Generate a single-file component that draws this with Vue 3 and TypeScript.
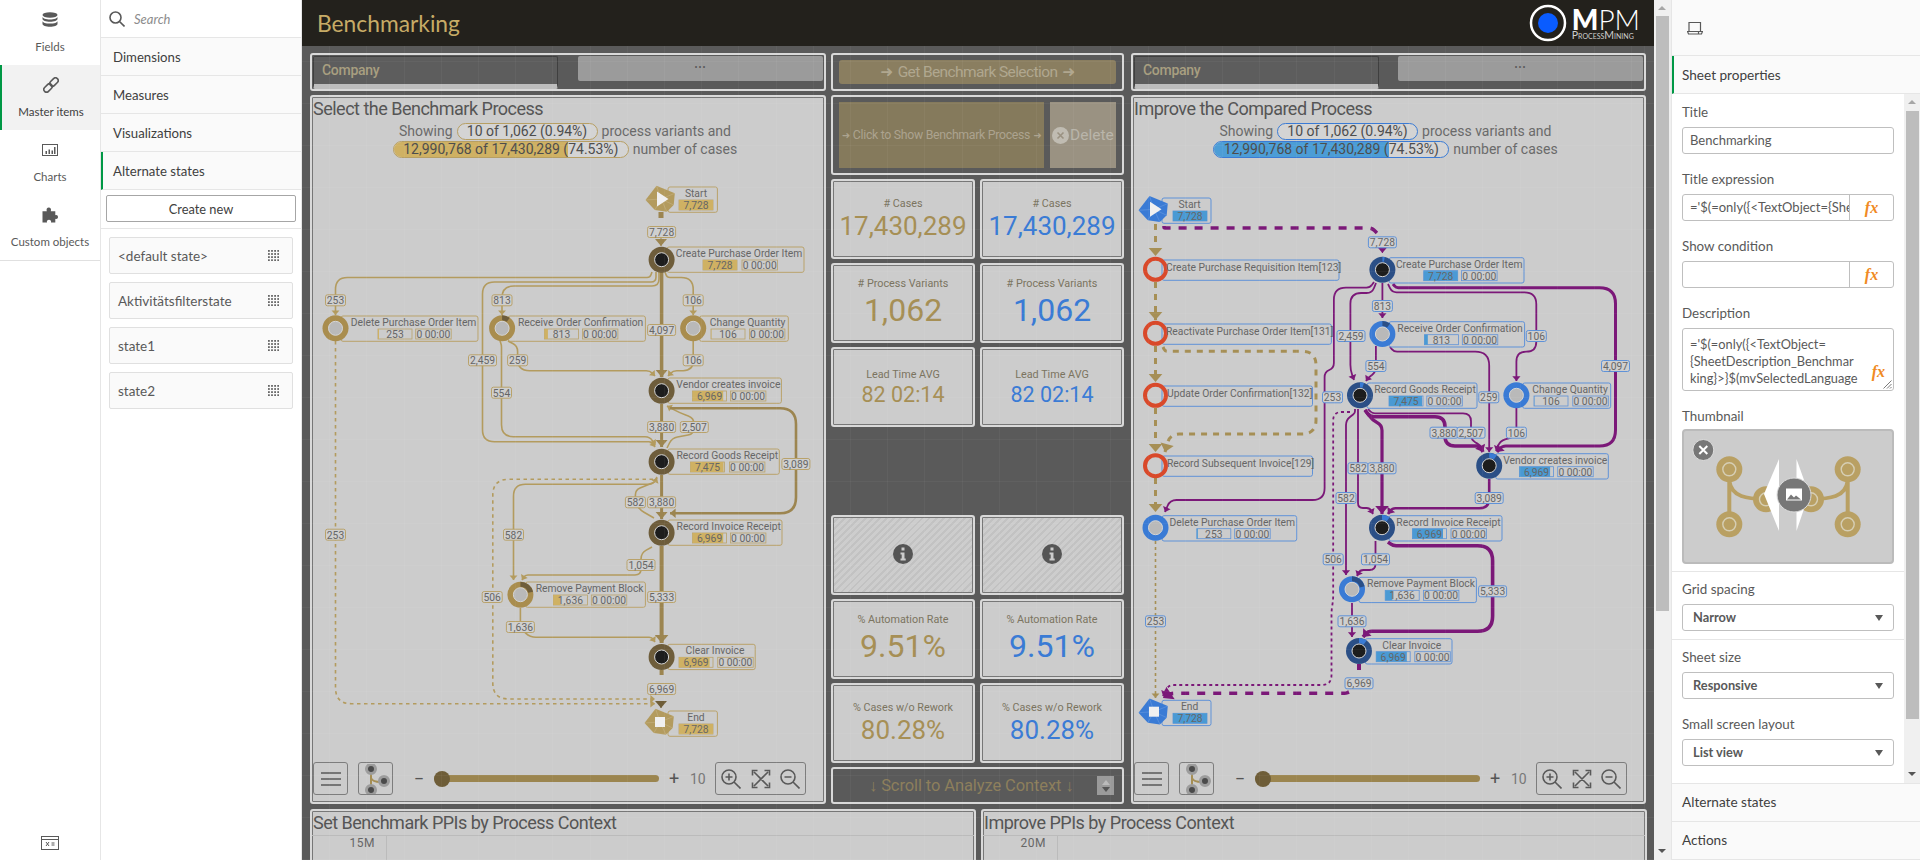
<template>
  <div class="app">
    <!-- left rail -->
    <aside class="rail">
      <div v-for="item in railItems" :key="item.label" class="rail-item" :class="{ active: item.active }">
        <svg class="rail-icon" viewBox="0 0 16 16">
          <g v-if="item.icon === 'db'" class="solid">
            <ellipse cx="8" cy="3" rx="7.5" ry="2.7" />
            <path d="M.5 4.700c0 1.600 3.400 2.700 7.500 2.700s7.500-1.100 7.500-2.700v2.400c0 1.600-3.400 2.700-7.500 2.700S.5 8.700 .5 7.100z" />
            <path d="M.5 8.900c0 1.600 3.400 2.700 7.500 2.700s7.500-1.100 7.500-2.700v3.200c0 1.600-3.400 2.700-7.500 2.700S.5 13.700 .5 12.100z" />
          </g>
          <g v-else-if="item.icon === 'link'" class="outline" transform="rotate(-45 8 8)">
            <rect x="-1" y="5.300" width="9.500" height="5.400" rx="2.700" />
            <rect x="7.500" y="5.300" width="9.500" height="5.400" rx="2.700" />
          </g>
          <g v-else-if="item.icon === 'chart'">
            <rect class="outline thin" x=".5" y="2.500" width="15" height="11" />
            <path class="solid" d="M3.500 9h1.500v3H3.500zM6.500 7.500H8V12H6.500zM9.500 8.500H11V12H9.500zM12 5h1.500v7H12z" />
          </g>
          <path v-else class="solid" d="M.5 4.300h4.300C4 2.200 5.200 .5 6.800 .5S9.600 2.200 8.800 4.300h4.500v3.900c1.500-.6 2.700.3 2.700 1.800s-1.200 2.400-2.700 1.800v3.700H9c.5-1.600-.6-2.700-2-2.700s-2.500 1.100-2 2.700H.5z" />
        </svg>
        <span>{{ item.label }}</span>
      </div>
      <svg class="rail-foot" viewBox="0 0 18 14">
        <rect class="outline thin" x=".5" y=".5" width="17" height="13" />
        <path class="outline thin" d="M.5 3.500h17M5 6l3 4M8 6l-3 4M10.500 7h3M10.500 9h3" />
      </svg>
    </aside>

    <!-- assets panel -->
    <section class="assets">
      <div class="search">
        <svg class="search-icon" viewBox="0 0 16 16">
          <circle cx="6.500" cy="6.500" r="5.500" />
          <path d="M10.500 10.500L15.500 15.500" />
        </svg>
        <span>Search</span>
      </div>
      <div v-for="row in assetRows" :key="row" class="asset-row" :class="{ active: row === 'Alternate states' }">{{ row }}</div>
      <div class="create-wrap">
        <button class="create">Create new</button>
      </div>
      <div class="states">
        <div v-for="state in states" :key="state" class="state">
          <span>{{ state }}</span>
          <svg class="grip" viewBox="0 0 11 11">
            <template v-for="r in 4" :key="r">
              <rect v-for="c in 4" :key="c" :x="(c - 1) * 3.100" :y="(r - 1) * 3.100" width="1.800" height="1.800" />
            </template>
          </svg>
        </div>
      </div>
    </section>

    <!-- sheet -->
    <main class="sheet">
      <header class="sheet-head">
        <h1>Benchmarking</h1>
        <div class="logo">
          <svg class="logo-mark" viewBox="0 0 38 38">
            <circle cx="19" cy="19" r="17" />
            <circle class="dot" cx="19" cy="19" r="10" />
          </svg>
          <div class="logo-text">
            <div class="logo-mpm"><b>M</b>PM</div>
            <div class="logo-sub">ProcessMining</div>
          </div>
        </div>
      </header>

      <div class="columns">
        <template v-for="(p, i) in panels" :key="p.key">
          <div class="col-process" :class="[p.theme, { second: i === 1 }]">
            <div class="tile company-tile">
              <div class="company">Company</div>
              <div class="more">•••</div>
            </div>
            <section class="tile process">
              <svg class="flow" :viewBox="p.viewBox">
                <g v-for="(edge, k) in p.edges" :key="k">
                  <path class="edge" :d="edge.d" :stroke="edge.color" :stroke-width="edge.width" :stroke-dasharray="edge.dash" />
                  <polygon v-if="edge.head" :points="edge.head" :fill="edge.color" />
                </g>
                <g v-for="n in p.nodes" :key="n.name">
                  <rect class="node-box" :x="n.x0" :y="n.y0" :width="n.x1 - n.x0" :height="n.kind === 'red' ? 20.300 : 25.300" rx="2" />
                  <circle v-if="n.kind === 'red'" class="ring-red" :cx="n.x" :cy="n.y" r="10.500" />
                  <g v-else-if="n.kind === 'start' || n.kind === 'end'" :transform="`translate(${n.x} ${n.y})`">
                    <polygon class="hex" points="-4.500,-13.300 13.800,-5.700 12.700,6 5.900,12.700 -6.200,11 -15.500,1" />
                    <path class="hex-lines" d="M-4.500-13.300L0 0M13.800-5.700L0 0M12.700 6L0 0M5.900 12.700L0 0M-6.200 11L0 0M-15.500 1L0 0" />
                    <polygon v-if="n.kind === 'start'" class="hex-mark" points="-4,-7.500 7.500,0 -4,7.500" />
                    <rect v-else class="hex-mark" x="-5" y="-5" width="10" height="10" />
                  </g>
                  <g v-else>
                    <circle :class="n.kind === 'dark' ? 'ring-dark' : 'ring-light'" :cx="n.x" :cy="n.y" r="13" />
                    <circle class="wedge" :class="n.kind" :cx="n.x" :cy="n.y" r="10.500" :stroke-dasharray="`${n.share * 66} 66`" :transform="`rotate(-90 ${n.x} ${n.y})`" />
                    <circle :class="n.kind === 'dark' ? 'core-dark' : 'core-light'" :cx="n.x" :cy="n.y" r="7" />
                  </g>
                  <text class="name" :class="{ lead: n.kind === 'red' }" :x="n.tx" :y="n.y0 + (n.kind === 'red' ? 7 : 6.500)">{{ n.name }}</text>
                  <template v-if="n.kind !== 'red'">
                    <rect class="cell" :x="n.bar" :y="n.y0 + 13" width="34" height="10" />
                    <rect class="cell-fill" :x="n.bar" :y="n.y0 + 13" :width="34 * n.fill" height="10" />
                    <text class="name" :x="n.bar + 17" :y="n.y0 + 18.300">{{ n.val }}</text>
                    <template v-if="n.time">
                      <rect class="cell" :x="n.time" :y="n.y0 + 13" width="35.500" height="10" />
                      <text class="name" :x="n.time + 17.700" :y="n.y0 + 18.300">0 00:00</text>
                    </template>
                  </template>
                </g>
                <g v-for="(b, k) in p.badges" :key="k">
                  <rect class="badge" :x="b.x - badgeWidth(b.t) / 2" :y="b.y - 5.500" :width="badgeWidth(b.t)" height="11" rx="2" />
                  <text class="name" :x="b.x" :y="b.y + .300">{{ b.t }}</text>
                </g>
              </svg>

              <h2>{{ p.title }}</h2>
              <div class="showing">
                <div class="line">
                  <span>Showing</span>
                  <span class="pill"><em>10 of 1,062 (0.94%)</em></span>
                  <span>process variants and</span>
                </div>
                <div class="line">
                  <span class="pill wide">
                    <i class="pill-fill" :style="{ width: caseShare + '%' }"></i>
                    <em>12,990,768 of 17,430,289 (74.53%)</em>
                  </span>
                  <span>number of cases</span>
                </div>
              </div>

              <div class="controls">
                <button class="ctl">
                  <svg viewBox="0 0 20 16"><path class="outline" d="M0 2h20M0 8h20M0 14h20" /></svg>
                </button>
                <button class="ctl branch">
                  <svg viewBox="0 0 28 30">
                    <path class="branch-line" d="M9 5v20M9 14c1 3 5 4 10 4" />
                    <circle class="branch-dot" cx="9" cy="5" r="4.500" />
                    <circle class="branch-dot" cx="22" cy="17" r="4.500" />
                    <circle class="branch-dot" cx="9" cy="26" r="4.500" />
                  </svg>
                </button>
                <span class="sign minus">−</span>
                <div class="track"><i class="thumb"></i></div>
                <span class="sign plus">+</span>
                <span class="ten">10</span>
                <div class="zooms">
                  <svg viewBox="0 0 20 20">
                    <circle class="outline" cx="8" cy="8" r="7" />
                    <path class="outline" d="M13 13l6.500 6.500M4.500 8h7M8 4.500v7" />
                  </svg>
                  <svg viewBox="0 0 20 20">
                    <path class="outline" d="M3 3l14 14M17 3L3 17M1.500 6.500v-5h5M13.500 1.500h5v5M1.500 13.500v5h5M13.500 18.500h5v-5" />
                  </svg>
                  <svg viewBox="0 0 20 20">
                    <circle class="outline" cx="8" cy="8" r="7" />
                    <path class="outline" d="M13 13l6.500 6.500M4.500 8h7" />
                  </svg>
                </div>
              </div>
            </section>
          </div>

          <!-- KPI column sits between both processes -->
          <div v-if="i === 0" class="col-mid">
            <div class="tile dark get-tile">
              <div class="get-btn"><span class="arrow">➜</span> Get Benchmark Selection <span class="arrow">➜</span></div>
            </div>
            <div class="tile dark pick-tile">
              <div class="pick"><span class="arrow">➜</span> Click to Show Benchmark Process <span class="arrow">➜</span></div>
              <div class="delete">
                <svg viewBox="0 0 17 17">
                  <circle cx="8.500" cy="8.500" r="8.500" />
                  <path d="M5.500 5.500l6 6M11.500 5.500l-6 6" />
                </svg>
                <span>Delete</span>
              </div>
            </div>
            <div class="kpis">
              <template v-for="kpi in kpis" :key="kpi.label">
                <div v-if="kpi.gap" class="kpi-gap"></div>
                <template v-else>
                  <div v-for="tone in tones" :key="tone" class="tile kpi" :class="{ hatch: kpi.info }">
                    <svg v-if="kpi.info" class="info" viewBox="0 0 20 20">
                      <circle cx="10" cy="10" r="10" />
                      <path d="M8.500 3.500h3v3h-3zM7.500 8.500h4v6h1.200v2H7.500v-2h1.200v-4H7.500z" />
                    </svg>
                    <template v-else>
                      <span class="kpi-label">{{ kpi.label }}</span>
                      <span class="kpi-value" :class="[tone, kpi.size]">{{ kpi.value }}</span>
                    </template>
                  </div>
                </template>
              </template>
            </div>
            <div class="tile dark scroll-tile">
              <span><b>↓</b> Scroll to Analyze Context <b>↓</b></span>
              <div class="stepper">
                <i class="tri up"></i>
                <i class="tri down"></i>
              </div>
            </div>
          </div>
        </template>
      </div>

      <div class="context">
        <section class="tile ctx">
          <h2>Set Benchmark PPIs by Process Context</h2>
          <div class="axis"><span>15M</span></div>
        </section>
        <section class="tile ctx">
          <h2>Improve PPIs by Process Context</h2>
          <div class="axis"><span>20M</span></div>
        </section>
      </div>
    </main>

    <div class="scrollbar outer">
      <i class="sb-arrow up"></i>
      <div class="sb-thumb"></div>
      <i class="sb-arrow down"></i>
    </div>

    <!-- properties -->
    <aside class="props">
      <div class="props-tool">
        <svg viewBox="0 0 16 14">
          <path d="M2 10V1.500h11.500V10M.5 10.500h11v2.500h-10zM11.500 10.500h4l-1 2.500h-3" />
        </svg>
      </div>
      <div class="props-tab">Sheet properties</div>
      <div class="props-body">
        <div class="props-scroll">
          <label>Title</label>
          <div class="field">Benchmarking</div>
          <label>Title expression</label>
          <div class="field fx-field">
            <span class="clip">{{ titleExpr }}</span>
            <span class="fx">fx</span>
          </div>
          <label>Show condition</label>
          <div class="field fx-field">
            <span class="clip"></span>
            <span class="fx">fx</span>
          </div>
          <label>Description</label>
          <div class="field area">
            <div v-for="l in descLines" :key="l">{{ l }}</div>
            <span class="fx">fx</span>
            <svg class="resize" viewBox="0 0 9 9"><path d="M8.500 .5l-8 8M8.500 4l-4.500 4.500M8.500 7l-1.500 1.500" /></svg>
          </div>
          <label>Thumbnail</label>
          <div class="thumb-box">
            <svg viewBox="1683 430 208 131">
              <g class="mpm">
                <path d="M1728.300 468v55M1846.700 468v55M1728.300 480c2 16 18 18 36 18M1846.700 480c-2 16-18 18-36 18" />
                <g v-for="c in thumbDots" :key="c[0] + '-' + c[1]">
                  <circle class="mpm-dot" :cx="c[0]" :cy="c[1]" r="13" />
                  <circle class="mpm-in" :cx="c[0]" :cy="c[1]" r="6.500" />
                </g>
              </g>
              <polygon class="white" points="1778,458 1763,493 1778,530" />
              <polygon class="white" points="1795.500,458 1808,493 1795.500,530" />
              <circle class="shade" cx="1793" cy="494" r="17" />
              <rect class="pic" x="1785.500" y="488" width="15" height="11" />
              <path class="pic-in" d="M1786 498.500l4-5 3 3 2-2 5 4z" />
              <circle class="shade small" cx="1702.300" cy="449" r="10.500" />
              <path class="close" d="M1698.300 445l8 8M1706.300 445l-8 8" />
            </svg>
          </div>
          <div class="sep"></div>
          <label>Grid spacing</label>
          <div class="field select last"><span>Narrow</span><i class="caret"></i></div>
          <div class="sep"></div>
          <label>Sheet size</label>
          <div class="field select"><span>Responsive</span><i class="caret"></i></div>
          <label>Small screen layout</label>
          <div class="field select"><span>List view</span><i class="caret"></i></div>
        </div>
        <div class="scrollbar inner">
          <i class="sb-arrow up"></i>
          <div class="sb-thumb"></div>
          <i class="sb-arrow down"></i>
        </div>
      </div>
      <div class="props-row">Alternate states</div>
      <div class="props-row">Actions</div>
    </aside>
  </div>
</template>

<script setup lang="ts">
type Pt = [number, number];

interface EdgeOpts {
  w?: number;
  c?: string;
  dash?: string;
  r?: number;
  a?: number;
}

const railItems = [
  { label: "Fields", icon: "db", active: false },
  { label: "Master items", icon: "link", active: true },
  { label: "Charts", icon: "chart", active: false },
  { label: "Custom objects", icon: "puzzle", active: false },
];
const assetRows = ["Dimensions", "Measures", "Visualizations", "Alternate states"];
const states = ["<default state>", "Aktivitätsfilterstate", "state1", "state2"];

const tones = ["gold", "blue"];
const kpis = [
  { label: "# Cases", value: "17,430,289", size: "s26" },
  { label: "# Process Variants", value: "1,062", size: "s32" },
  { label: "Lead Time AVG", value: "82 02:14", size: "s21" },
  { label: "gap", gap: true },
  { label: "info", info: true },
  { label: "% Automation Rate", value: "9.51%", size: "s32" },
  { label: "% Cases w/o Rework", value: "80.28%", size: "s26" },
];

const caseShare = 74.53;
const titleExpr = "='$(=only({<TextObject={SheetTitle_Benchmarking}>}";
const descLines = ["='$(=only({<TextObject=", "{SheetDescription_Benchmar", "king}>}$(mvSelectedLanguage"];
const thumbDots: Pt[] = [
  [1728.3, 468.3],
  [1728.3, 523.3],
  [1846.7, 468.3],
  [1846.7, 523.3],
  [1765, 498.3],
  [1810, 498.3],
];

function rounded(pts: Pt[], r: number): string {
  let d = `M${pts[0][0]} ${pts[0][1]}`;
  for (let i = 1; i < pts.length - 1; i++) {
    const [ax, ay] = pts[i - 1];
    const [bx, by] = pts[i];
    const [cx, cy] = pts[i + 1];
    const l1 = Math.hypot(ax - bx, ay - by);
    const l2 = Math.hypot(cx - bx, cy - by);
    const k = Math.min(r, l1 / 2, l2 / 2);
    d += ` L${bx + ((ax - bx) / l1) * k} ${by + ((ay - by) / l1) * k}`;
    d += ` Q${bx} ${by} ${bx + ((cx - bx) / l2) * k} ${by + ((cy - by) / l2) * k}`;
  }
  const end = pts[pts.length - 1];
  return `${d} L${end[0]} ${end[1]}`;
}

function arrowHead(pts: Pt[], size: number): string {
  const [tx, ty] = pts[pts.length - 1];
  const [px, py] = pts[pts.length - 2];
  const len = Math.hypot(tx - px, ty - py);
  const ux = (tx - px) / len;
  const uy = (ty - py) / len;
  const bx = tx - ux * size;
  const by = ty - uy * size;
  const s = size * 0.85;
  return `${tx},${ty} ${bx - uy * s},${by + ux * s} ${bx + uy * s},${by - ux * s}`;
}

function edge(pts: Pt[], base: string, o: EdgeOpts = {}) {
  const w = o.w ?? 1.6;
  return {
    d: rounded(pts, o.r ?? 12),
    color: o.c ?? base,
    width: w,
    dash: o.dash,
    head: o.a === 0 ? "" : arrowHead(pts, o.a ?? 3 + w),
  };
}

function node(x: number, y: number, kind: string, share: number, name: string, x0: number, x1: number, y0: number, tx: number, bar = 0, val = "", fill = 0, time = 0) {
  return { x, y, kind, share, name, x0, x1, y0, tx, bar, val, fill, time };
}

function badge(x: number, y: number, t: string) {
  return { x, y, t };
}

function badgeWidth(t: string): number {
  return t.length > 3 ? 28 : 20;
}

const goldThin = "#b39b5e";
const goldMain = "#9c8550";
const purple = "#7b1878";
const dashGold = "#a68f55";

const benchmarkEdges = [
  edge([[661, 212], [661, 218]], goldMain, { w: 5, a: 0 }),
  edge([[661, 238], [661, 246]], goldMain, { w: 1, a: 7 }),
  edge([[652, 272], [650, 277.5], [335.5, 277.5], [335.5, 315]], goldThin),
  edge([[656, 272], [656, 282], [482.5, 282], [482.5, 441.7], [652, 441.7], [655, 447]], goldThin),
  edge([[659, 272], [659, 286], [502, 286], [502, 315]], goldThin),
  edge([[661.6, 272], [661.6, 377]], goldMain, { w: 3.5, a: 7 }),
  edge([[665, 272], [667, 277.5], [693.2, 277.5], [693.2, 315]], goldThin),
  edge([[508, 341], [517.6, 346], [517.6, 370.7], [650, 370.7], [655, 376]], goldThin),
  edge([[693.2, 341], [693.2, 370.7], [673, 370.7], [668, 376]], goldThin),
  edge([[500, 341], [501.5, 345], [501.5, 436.7], [650, 436.7], [655, 445]], goldThin),
  edge([[661.6, 404], [661.6, 447]], goldMain, { w: 3, a: 7 }),
  edge([[667, 448], [672, 438], [694, 434], [694, 418], [680, 413], [667, 406]], goldThin, { r: 6 }),
  edge([[670, 408.3], [796, 408.3], [796, 513.3], [670, 513.3]], goldMain, { w: 2.6, r: 16 }),
  edge([[661.6, 475], [661.6, 519]], goldMain, { w: 3, a: 7 }),
  edge([[654, 518], [640, 510], [635.4, 502], [635.4, 490], [655, 482], [657, 478]], goldThin, { r: 5 }),
  edge([[657, 477], [653, 484.3], [513.5, 484.3], [513.5, 580]], goldThin),
  edge([[653, 479.3], [492.8, 479.3], [492.8, 699], [655, 699]], goldThin, { dash: "3.500 3.500", r: 16 }),
  edge([[335.5, 341], [335.5, 703.7], [655, 703.7]], goldThin, { dash: "3.500 3.500", r: 16 }),
  edge([[652, 547], [641, 553], [641, 575], [525, 575], [522, 580]], goldThin, { r: 6 }),
  edge([[661.6, 546], [661.6, 643]], goldMain, { w: 4, a: 8 }),
  edge([[520.4, 608], [520.4, 628], [530, 637.3], [652, 637.3], [655, 642]], goldThin, { r: 6 }),
  edge([[661.6, 670], [661.6, 675]], goldMain, { w: 4, a: 0 }),
  edge([[661, 702], [661, 708]], "#6e5d38", { w: 1, a: 7 }),
];

const compareEdges = [
  edge([[1155.5, 224], [1155.5, 256]], dashGold, { w: 3, dash: "6 6", a: 8 }),
  edge([[1155.5, 282], [1155.5, 320]], dashGold, { w: 3, dash: "6 6", a: 8 }),
  edge([[1155.5, 346], [1155.5, 382]], dashGold, { w: 3, dash: "6 6", a: 8 }),
  edge([[1155.5, 408], [1155.5, 452]], dashGold, { w: 3, dash: "6 6", a: 8 }),
  edge([[1155.5, 478], [1155.5, 512]], dashGold, { w: 3, dash: "6 6", a: 8 }),
  edge([[1163, 347], [1165, 351.3], [1316, 351.3], [1316, 434], [1170, 434], [1165, 452]], dashGold, { w: 3, dash: "6 6", r: 14, a: 8 }),
  edge([[1155.5, 541], [1155.5, 698]], dashGold, { dash: "3 3" }),
  edge([[1164, 226], [1164, 228], [1372, 228], [1377, 233]], purple, { w: 3.5, dash: "8 8", a: 0 }),
  edge([[1382.4, 246], [1382.4, 253]], purple, { w: 1, a: 8 }),
  edge([[1382.4, 283], [1382.4, 318]], purple, { w: 1.8 }),
  edge([[1374, 282], [1370, 287.7], [1333.9, 287.7], [1333.9, 368], [1324.6, 372], [1324.6, 500], [1170, 500], [1165, 512]], purple, { w: 1.8 }),
  edge([[1376, 283], [1372, 293], [1350.4, 293], [1350.4, 370], [1354, 380]], purple, { w: 1.8 }),
  edge([[1388, 284], [1392, 292.3], [1536.3, 292.3], [1536.3, 351.7], [1516.4, 351.7], [1516.4, 381]], purple, { w: 1.8 }),
  edge([[1393, 284], [1396, 287.7], [1615.5, 287.7], [1615.5, 446], [1502, 446], [1497, 452]], purple, { w: 3, r: 16 }),
  edge([[1375.9, 346], [1375.9, 372], [1368, 378], [1366, 381]], purple, { w: 1.8, r: 5 }),
  edge([[1390, 347], [1394, 351.7], [1489.2, 351.7], [1489.2, 452]], purple, { w: 1.8, r: 14 }),
  edge([[1516.4, 408], [1516.4, 436], [1500, 441], [1496, 451]], purple, { w: 1.8, r: 8 }),
  edge([[1365, 410], [1370, 416.7], [1445, 416.7], [1445, 446], [1480, 446], [1483, 452]], purple, { w: 3.5, r: 10 }),
  edge([[1368, 409], [1372, 413.3], [1471, 413.3], [1471, 440], [1480, 445], [1483, 451]], purple, { w: 1.8, r: 8 }),
  edge([[1365, 410], [1372, 420], [1382, 425], [1382, 514]], purple, { w: 3.2, r: 8, a: 8 }),
  edge([[1358, 409], [1358, 508], [1370, 508], [1373, 514]], purple, { w: 1.8, r: 5 }),
  edge([[1355, 409], [1355, 413], [1346, 420], [1346, 575]], purple, { w: 1.8, r: 5 }),
  edge([[1350, 412], [1333.2, 412], [1333.2, 600], [1331.5, 610], [1331.5, 685], [1168, 685], [1163, 696]], purple, { w: 1.8, dash: "3 3", r: 10 }),
  edge([[1489.2, 479], [1489.2, 508.3], [1392, 508.3], [1388, 514]], purple, { w: 2.6, r: 10 }),
  edge([[1375.5, 541], [1375.5, 570], [1360, 570], [1357, 576]], purple, { w: 1.8, r: 6 }),
  edge([[1388, 542], [1393, 545.7], [1492.6, 545.7], [1492.6, 631.3], [1368, 631.3], [1363, 637]], purple, { w: 3.6, r: 15 }),
  edge([[1352, 603], [1352, 637]], purple, { w: 1.8 }),
  edge([[1359, 664], [1359, 670]], purple, { w: 4, a: 0 }),
  edge([[1349, 692], [1346, 693.3], [1170, 693.3], [1163, 698]], purple, { w: 3.6, dash: "8 8", a: 9, r: 6 }),
];

const panels = [
  {
    key: "bench",
    theme: "gold",
    title: "Select the Benchmark Process",
    viewBox: "312 97 512 705",
    edges: benchmarkEdges,
    nodes: [
      node(661, 199, "start", 0, "Start", 668, 717.4, 187, 696, 679, "7,728", 1),
      node(661.6, 259.7, "dark", 0, "Create Purchase Order Item", 667, 804, 247, 739, 703, "7,728", 1, 742),
      node(335.5, 328.3, "light", 0, "Delete Purchase Order Item", 341, 478, 316, 413.6, 378, "253", 0.03, 415.7),
      node(502.1, 328.3, "light", 0.1, "Receive Order Confirmation", 508, 645.4, 316, 580.6, 544.5, "813", 0.1, 582.4),
      node(693.2, 328.3, "light", 0, "Change Quantity", 699.5, 788.3, 316, 747.6, 711, "106", 0.01, 749.4),
      node(661.6, 390.7, "dark", 0, "Vendor creates invoice", 667.8, 781.4, 378, 728.4, 692.6, "6,969", 0.9, 730.4),
      node(661.6, 461.7, "dark", 0, "Record Goods Receipt", 667.8, 779.3, 449, 727.3, 690.5, "7,475", 0.97, 729.4),
      node(661.6, 532.7, "dark", 0, "Record Invoice Receipt", 667.8, 782, 520, 728.7, 692.6, "6,969", 0.9, 730.4),
      node(520.4, 594.7, "light", 0.21, "Remove Payment Block", 525.5, 645.4, 582, 589.6, 553.4, "1,636", 0.21, 591.3),
      node(661.6, 657, "dark", 0, "Clear Invoice", 667.8, 755.2, 644.3, 715, 679, "6,969", 0.9, 717.7),
      node(660, 722, "end", 0, "End", 668, 717.4, 711, 696, 679, "7,728", 1),
    ],
    badges: [
      badge(661.6, 232, "7,728"), badge(335.5, 300.3, "253"), badge(502, 300.3, "813"), badge(693.2, 300.3, "106"),
      badge(661.6, 330, "4,097"), badge(482.5, 360.3, "2,459"), badge(517.6, 360.3, "259"), badge(693.2, 360.3, "106"),
      badge(501.5, 392.7, "554"), badge(661.6, 427, "3,880"), badge(694.3, 427, "2,507"), badge(795.9, 464, "3,089"),
      badge(635.4, 502.3, "582"), badge(661.6, 502.3, "3,880"), badge(335.5, 534.7, "253"), badge(513.5, 534.7, "582"),
      badge(641, 565, "1,054"), badge(492.2, 597, "506"), badge(661.6, 597, "5,333"), badge(520.4, 627, "1,636"),
      badge(661.6, 689, "6,969"),
    ],
  },
  {
    key: "compare",
    theme: "blue",
    title: "Improve the Compared Process",
    viewBox: "1133 97 511 705",
    edges: compareEdges,
    nodes: [
      node(1154, 209.3, "start", 0, "Start", 1162, 1211, 198, 1189.6, 1173, "7,728", 1),
      node(1155.5, 269.3, "red", 0, "Create Purchase Requisition Item[123]", 1162, 1339, 260, 1166),
      node(1155.5, 333.3, "red", 0, "Reactivate Purchase Order Item[131]", 1162, 1331.4, 324, 1166),
      node(1155.5, 395.3, "red", 0, "Update Order Confirmation[132]", 1162, 1312.5, 386, 1167),
      node(1155.5, 465.7, "red", 0, "Record Subsequent Invoice[129]", 1162, 1312.5, 456, 1167),
      node(1155.5, 527.7, "light", 0, "Delete Purchase Order Item", 1162, 1296.7, 515.7, 1232.3, 1196.8, "253", 0.03, 1234.7),
      node(1382.4, 269.7, "dark", 0.03, "Create Purchase Order Item", 1389, 1524, 257.7, 1459.2, 1423.7, "7,728", 1, 1461.6),
      node(1382.4, 334, "light", 0.1, "Receive Order Confirmation", 1389, 1524.6, 321.7, 1460, 1424.4, "813", 0.1, 1462.3),
      node(1360, 395.3, "dark", 0.05, "Record Goods Receipt", 1367, 1477, 383, 1425, 1389, "7,475", 0.97, 1426.8),
      node(1516.4, 395.3, "light", 0, "Change Quantity", 1522.6, 1610.7, 383, 1570, 1534, "106", 0.01, 1572.8),
      node(1489.2, 465.7, "dark", 0.1, "Vendor creates invoice", 1495.7, 1608.3, 453.7, 1555.3, 1519.5, "6,969", 0.9, 1557.7),
      node(1382, 527.7, "dark", 0.1, "Record Invoice Receipt", 1389, 1502, 515.7, 1448.5, 1412.4, "6,969", 0.9, 1451),
      node(1352, 589.3, "light", 0.21, "Remove Payment Block", 1359, 1476.4, 577.3, 1421, 1385.2, "1,636", 0.21, 1423.4),
      node(1359, 651, "dark", 0.1, "Clear Invoice", 1365.2, 1452, 638.7, 1411.7, 1376.2, "6,969", 0.9, 1414.8),
      node(1154, 711.7, "end", 0, "End", 1162, 1211, 700.3, 1189.6, 1173, "7,728", 1),
    ],
    badges: [
      badge(1382.4, 242.3, "7,728"), badge(1382.4, 306, "813"), badge(1351, 336, "2,459"), badge(1536.3, 336, "106"),
      badge(1615.5, 366, "4,097"), badge(1375.9, 366, "554"), badge(1332.5, 397.3, "253"), badge(1488.8, 397.3, "259"),
      badge(1444, 432.7, "3,880"), badge(1471, 432.7, "2,507"), badge(1516.4, 432.7, "106"), badge(1358, 468.3, "582"),
      badge(1382, 468.3, "3,880"), badge(1346, 498, "582"), badge(1489.2, 498, "3,089"), badge(1333.2, 559.3, "506"),
      badge(1375.5, 559.3, "1,054"), badge(1492.6, 591.3, "5,333"), badge(1155.5, 621.3, "253"), badge(1352, 621.3, "1,636"),
      badge(1359, 683.3, "6,969"),
    ],
  },
];
</script>

<style>
html,
body {
  margin: 0;
  overflow: hidden;
}
</style>

<style scoped>
.app {
  display: flex;
  width: 1920px;
  height: 860px;
  overflow: hidden;
  font-family: Lato, "Noto Sans", sans-serif;
  color: #404040;
  background: #fff;
}

svg .solid {
  fill: #595959;
}

.outline {
  fill: none;
  stroke: #595959;
  stroke-width: 1.6;
}

.outline.thin {
  stroke-width: 1;
}

/* rail */
.rail {
  position: relative;
  width: 100px;
  flex: none;
  border-right: 1px solid #e6e6e6;
  display: flex;
  flex-direction: column;
}

.rail::after {
  content: "";
  display: block;
  border-bottom: 1px solid #e0e0e0;
}

.rail-item {
  height: 65px;
  box-sizing: border-box;
  display: flex;
  flex-direction: column;
  align-items: center;
  padding-top: 12px;
  gap: 12px;
  font-size: 11.5px;
  color: #595959;
}

.rail-item.active {
  background: #f2f2f2;
  border-left: 2px solid #009845;
  color: #404040;
}

.rail-icon {
  width: 16px;
  height: 16px;
}

.rail-foot {
  position: absolute;
  left: 41px;
  bottom: 10px;
  width: 18px;
  height: 14px;
}

/* assets */
.assets {
  width: 200px;
  flex: none;
  border-right: 1px solid #e6e6e6;
}

.search {
  height: 37px;
  border-bottom: 1px solid #e6e6e6;
  display: flex;
  align-items: center;
  gap: 9px;
  padding-left: 8px;
  font-size: 13px;
  font-style: italic;
  color: #8c8c8c;
}

.search-icon {
  width: 16px;
  height: 16px;
  fill: none;
  stroke: #595959;
  stroke-width: 1.6;
}

.asset-row {
  height: 37px;
  line-height: 39px;
  padding-left: 12px;
  background: #fafafa;
  border-bottom: 1px solid #e6e6e6;
  font-size: 13.2px;
}

.asset-row.active {
  border-left: 2px solid #009845;
  padding-left: 10px;
}

.create-wrap {
  padding: 5px 5px 6px;
  border-bottom: 1px solid #e6e6e6;
}

.create {
  display: block;
  width: 100%;
  height: 27px;
  background: #fff;
  border: 1px solid #a6a6a6;
  border-radius: 2px;
  font: 12.8px Lato, sans-serif;
  color: #404040;
}

.states {
  padding: 8px;
  display: flex;
  flex-direction: column;
  gap: 8px;
}

.state {
  height: 37px;
  box-sizing: border-box;
  padding: 0 13px 0 8px;
  background: #fafafa;
  border: 1px solid #e0e0e0;
  border-radius: 2px;
  display: flex;
  align-items: center;
  justify-content: space-between;
  font-size: 13.5px;
  color: #595959;
}

.grip {
  width: 11px;
  height: 11px;
  fill: #666;
}

/* sheet */
.sheet {
  position: relative;
  width: 1352px;
  flex: none;
  height: 860px;
  overflow: hidden;
  background: #5a5a5a;
}

.sheet::after {
  content: "";
  position: absolute;
  left: 0;
  right: 0;
  top: 46px;
  bottom: 0;
  pointer-events: none;
  background-image:
    repeating-linear-gradient(90deg, rgba(255, 255, 255, 0.04) 0 1px, transparent 1px 37.2px),
    repeating-linear-gradient(0deg, rgba(255, 255, 255, 0.04) 0 1px, transparent 1px 42px);
  background-position: -10px 0;
}

.sheet-head {
  height: 46px;
  background: #23211c;
  display: flex;
  align-items: center;
  justify-content: space-between;
  padding: 0 14px 0 15px;
}

.sheet-head h1 {
  margin: 0;
  font: 400 22.8px Lato, sans-serif;
  color: #c7ab66;
}

.logo {
  display: flex;
  align-items: center;
  gap: 5px;
}

.logo-mark {
  width: 38px;
  height: 38px;
  fill: none;
  stroke: #fff;
  stroke-width: 2.5;
}

.logo-mark .dot {
  fill: #0a5cff;
  stroke: none;
}

.logo-text {
  color: #fff;
  font-family: Lato, sans-serif;
}

.logo-mpm {
  font-size: 28px;
  line-height: 24px;
  font-weight: 300;
}

.logo-mpm b {
  font-weight: 900;
}

.logo-sub {
  font-size: 10.5px;
  line-height: 9px;
  color: #cfcfcf;
  font-variant: small-caps;
}

.columns {
  display: flex;
  gap: 5px;
  height: 751px;
  padding: 7px 0 0 8px;
}

.col-process {
  width: 516px;
  flex: none;
  display: flex;
  flex-direction: column;
  gap: 4px;
}

.col-process.second {
  width: 515px;
  margin-left: 2px;
}

.col-mid {
  width: 293px;
  flex: none;
  display: flex;
  flex-direction: column;
  gap: 4px;
}

.tile {
  box-sizing: border-box;
  background: #ccc;
  border: 2px solid #d9d9d9;
  border-radius: 3px;
  box-shadow: inset 0 0 0 1px #777;
  font-family: Roboto, sans-serif;
}

.tile.dark {
  background: #5a5a5a;
  box-shadow: none;
}

.company-tile {
  height: 38px;
  flex: none;
  background: #5a5a5a;
  box-shadow: none;
  display: flex;
  align-items: flex-start;
  justify-content: space-between;
}

.company {
  width: 245px;
  height: 33px;
  box-sizing: border-box;
  margin: 1px 0 0 1px;
  padding: 5px 0 0 8px;
  background: #5d5d5d;
  border: 1px solid #3f3f3f;
  border-bottom: 5px solid #bdbdbd;
  border-radius: 2px;
  font-size: 14px;
  font-weight: 500;
  letter-spacing: -0.3px;
  color: #a89f80;
}

.more {
  width: 245px;
  height: 25px;
  margin: 1px 1px 0 0;
  background: #9b9b9b;
  border-radius: 2px;
  text-align: center;
  line-height: 23px;
  font-size: 9px;
  letter-spacing: 1px;
  color: #555;
}

.process {
  position: relative;
  flex: 1;
  display: flex;
  flex-direction: column;
  min-height: 0;
}

.flow {
  position: absolute;
  inset: 0;
  width: 100%;
  height: 100%;
  font-family: Roboto, sans-serif;
}

.edge {
  fill: none;
}

.node-box {
  fill: none;
  stroke-width: 1;
}

.gold .node-box,
.gold .badge {
  stroke: #b9a26a;
}

.blue .node-box,
.blue .badge {
  stroke: #5f92d8;
}

.badge {
  fill: #cfcfcf;
  stroke-width: 1;
}

.name {
  font-size: 10.3px;
  fill: #666;
  text-anchor: middle;
  dominant-baseline: central;
}

.name.lead {
  text-anchor: start;
}

.cell {
  fill: none;
  stroke-width: 0.8;
}

.gold .cell {
  stroke: #b9a26a;
}

.blue .cell {
  stroke: #5f92d8;
}

.gold .cell-fill {
  fill: #cfb163;
}

.blue .cell-fill {
  fill: #4a9ad4;
}

.ring-red {
  fill: none;
  stroke: #d9492a;
  stroke-width: 4;
}

.gold .hex {
  fill: #b39b5e;
}

.blue .hex {
  fill: #3a7bd5;
}

.hex-lines {
  stroke: rgba(255, 255, 255, 0.2);
  stroke-width: 0.7;
}

.hex-mark {
  fill: #f0f0f0;
}

.gold .ring-dark {
  fill: #6e5d3b;
}

.blue .ring-dark {
  fill: #2b4f86;
}

.gold .ring-light {
  fill: #a98d4e;
}

.blue .ring-light {
  fill: #3a7bd5;
}

.wedge {
  fill: none;
  stroke-width: 5;
}

.gold .wedge.light {
  stroke: #6e5d3b;
}

.gold .wedge.dark {
  stroke: #a98d4e;
}

.blue .wedge.light {
  stroke: #2b4f86;
}

.blue .wedge.dark {
  stroke: #3a7bd5;
}

.core-dark {
  fill: #1d1d1d;
  stroke: #d5d5d5;
  stroke-width: 1;
}

.core-light {
  fill: #b9b9b9;
  stroke: #d5d5d5;
  stroke-width: 1;
}

.process h2,
.ctx h2 {
  position: relative;
  margin: 0;
  padding-left: 1px;
  font-size: 18px;
  line-height: 24px;
  font-weight: 400;
  letter-spacing: -0.5px;
  color: #555;
}

.showing {
  position: relative;
  margin-top: 1px;
  padding-right: 6px;
  display: flex;
  flex-direction: column;
  align-items: center;
  font-size: 14px;
  color: #6a6a6a;
}

.line {
  height: 18px;
  display: flex;
  align-items: center;
  gap: 4px;
}

.pill {
  position: relative;
  width: 141px;
  height: 17px;
  box-sizing: border-box;
  display: block;
  border-radius: 9px;
  overflow: hidden;
  background: #d4d4d4;
  text-align: center;
  font-size: 14px;
  line-height: 14px;
  color: #4d4d4d;
}

.pill.wide {
  width: 236px;
}

.gold .pill {
  border: 1px solid #b79f63;
}

.blue .pill {
  border: 1px solid #3a7bd5;
}

.pill em {
  position: relative;
  font-style: normal;
}

.pill-fill {
  position: absolute;
  left: 0;
  top: 0;
  bottom: 0;
}

.gold .pill-fill {
  background: #cfb163;
}

.blue .pill-fill {
  background: #4c9dd6;
}

.controls {
  position: relative;
  margin-top: auto;
  padding: 0 0 7px 1px;
  display: flex;
  align-items: center;
}

.ctl {
  width: 35px;
  height: 33px;
  padding: 0;
  display: flex;
  align-items: center;
  justify-content: center;
  background: none;
  border: 1px solid #7d7d7d;
  border-radius: 3px;
}

.ctl svg {
  width: 20px;
  height: 16px;
}

.branch {
  margin-left: 10px;
}

.branch svg {
  width: 28px;
  height: 30px;
}

.branch-line {
  fill: none;
  stroke: #a68f55;
  stroke-width: 2;
}

.branch-dot {
  fill: #4a4a4a;
  stroke: #9c9c9c;
  stroke-width: 3;
}

.sign {
  width: 12px;
  font-size: 18px;
  line-height: 18px;
  text-align: center;
  color: #555;
}

.minus {
  margin-left: 20px;
}

.plus {
  margin-left: 9px;
}

.track {
  position: relative;
  width: 225px;
  height: 7px;
  margin-left: 9px;
  background: #9b854f;
  border-radius: 4px;
}

.thumb {
  position: absolute;
  left: 0;
  top: -4.5px;
  width: 16px;
  height: 16px;
  border-radius: 50%;
  background: #6e5d38;
}

.ten {
  width: 15px;
  margin-left: 10px;
  font-size: 14px;
  color: #777;
}

.zooms {
  width: 91px;
  height: 33px;
  box-sizing: border-box;
  margin-left: 10px;
  display: flex;
  align-items: center;
  justify-content: space-between;
  padding: 0 5px;
  border: 1px solid #7d7d7d;
  border-radius: 3px;
}

.zooms svg {
  width: 20px;
  height: 20px;
}

/* KPI column */
.get-tile {
  height: 38px;
  flex: none;
  padding: 5px 6px;
}

.get-btn {
  height: 100%;
  background: #8a7e60;
  border-radius: 3px;
  display: flex;
  align-items: center;
  justify-content: center;
  gap: 5px;
  font-size: 15.5px;
  letter-spacing: -0.6px;
  color: #b0a78f;
}

.arrow {
  font-family: "DejaVu Sans", sans-serif;
}

.pick-tile {
  height: 80px;
  flex: none;
  padding: 5px 6px;
  display: flex;
  gap: 6px;
}

.pick {
  flex: 1;
  min-width: 0;
  background: #857a5c;
  display: flex;
  align-items: center;
  justify-content: center;
  gap: 3px;
  white-space: nowrap;
  font-size: 12.3px;
  letter-spacing: -0.3px;
  color: #aca38f;
}

.pick .arrow {
  font-size: 10px;
}

.delete {
  width: 66px;
  flex: none;
  background: #9a9282;
  display: flex;
  align-items: center;
  padding-left: 2px;
  box-sizing: border-box;
  gap: 1px;
  font-size: 15.5px;
  color: #b9b5aa;
}

.delete svg {
  width: 17px;
  height: 17px;
  flex: none;
  fill: #c0bcb2;
}

.delete path {
  stroke: #9a9282;
  stroke-width: 1.6;
}

.kpis {
  display: grid;
  grid-template-columns: 144px 144px;
  grid-auto-rows: 80px;
  gap: 4px 5px;
}

.kpi {
  display: flex;
  flex-direction: column;
  align-items: center;
  justify-content: center;
}

.kpi-gap {
  grid-column: span 2;
}

.kpi-label {
  font-size: 10.8px;
  line-height: 14px;
  color: #7b7460;
}

.kpi-value.gold {
  color: #a68f55;
}

.kpi-value.blue {
  color: #3a7bd5;
}

.s26 {
  font-size: 26px;
}

.s32 {
  font-size: 32px;
}

.s21 {
  font-size: 21.5px;
}

.hatch {
  background: repeating-linear-gradient(135deg, #cdcdcd 0 3px, #c2c2c2 3px 5px);
}

.info {
  width: 20px;
  height: 20px;
  fill: #555;
  margin-top: -3px;
}

.info path {
  fill: #ccc;
}

.scroll-tile {
  position: relative;
  height: 37px;
  flex: none;
  display: flex;
  align-items: center;
  padding-left: 36px;
  font-size: 16.5px;
  letter-spacing: -0.1px;
  color: #8d7f5c;
}

.stepper {
  position: absolute;
  right: 8px;
  top: 7px;
  width: 17px;
  height: 19px;
  background: #9a9a9a;
  display: flex;
  flex-direction: column;
  align-items: center;
  justify-content: center;
  gap: 2px;
}

.tri {
  width: 0;
  height: 0;
  border-left: 4px solid transparent;
  border-right: 4px solid transparent;
}

.tri.up {
  border-bottom: 5px solid #bbb;
}

.tri.down {
  border-top: 5px solid #555;
}

.context {
  display: flex;
  gap: 5.5px;
  margin-top: 5px;
  padding-left: 8px;
}

.ctx {
  width: 665.5px;
  height: 70px;
  flex: none;
}

.axis {
  position: relative;
  height: 40px;
  margin-top: 0;
  border-top: 1px solid #bbb;
  font-size: 12px;
  color: #666;
  letter-spacing: 0.5px;
}

.axis span {
  display: block;
  width: 75px;
  height: 100%;
  box-sizing: border-box;
  padding: 0 11px 0 0;
  text-align: right;
  border-right: 1px solid #bbb;
}

.scrollbar {
  position: relative;
  flex: none;
  width: 17px;
  background: #f0f0f0;
}

.sb-thumb {
  position: absolute;
  left: 2px;
  right: 2px;
  background: #bdbdbd;
}

.outer {
  height: 860px;
}

.outer .sb-thumb {
  top: 16px;
  height: 595px;
}

.inner .sb-thumb {
  top: 17px;
  height: 608px;
}

.sb-arrow {
  position: absolute;
  left: 4px;
  width: 0;
  height: 0;
  border-left: 4px solid transparent;
  border-right: 4px solid transparent;
}

.sb-arrow.up {
  top: 6px;
  border-bottom: 4px solid #a6a6a6;
}

.sb-arrow.down {
  bottom: 7px;
  border-top: 4px solid #555;
}

/* properties */
.props {
  flex: 1;
  min-width: 0;
  border-left: 1px solid #e6e6e6;
  display: flex;
  flex-direction: column;
}

.props-tool {
  height: 58px;
  box-sizing: border-box;
  padding: 21px 0 0 15px;
  background: #fafafa;
  border-bottom: 1px solid #e6e6e6;
}

.props-tool svg {
  display: block;
  width: 16px;
  height: 14px;
  fill: none;
  stroke: #595959;
  stroke-width: 1.2;
}

.props-tab {
  height: 38px;
  box-sizing: border-box;
  line-height: 38px;
  padding-left: 8px;
  background: #fafafa;
  border-left: 2px solid #009845;
  border-bottom: 1px solid #e6e6e6;
  font-size: 13.6px;
}

.props-body {
  height: 689px;
  display: flex;
  flex: none;
  border-bottom: 1px solid #e6e6e6;
}

.props-scroll {
  width: 232px;
  flex: none;
  box-sizing: border-box;
  padding-top: 1px;
  overflow: hidden;
  color: #595959;
}

.inner {
  height: 689px;
}

label {
  display: block;
  height: 17px;
  margin: 9px 10px 6px;
  line-height: 17px;
  font-size: 13.4px;
}

.field {
  position: relative;
  height: 27px;
  box-sizing: border-box;
  margin: 0 10px 17px;
  padding-left: 7px;
  line-height: 25px;
  border: 1px solid #bfbfbf;
  border-radius: 3px;
  font-size: 13px;
  color: #595959;
}

.fx-field {
  display: flex;
  padding-left: 0;
}

.clip {
  width: 167px;
  padding: 0 6px 0 7px;
  white-space: nowrap;
  overflow: hidden;
  box-sizing: border-box;
  border-right: 1px solid #bfbfbf;
  flex: none;
}

.fx {
  flex: 1;
  text-align: center;
  font: italic 700 16px "Liberation Serif", serif;
  line-height: 25px;
  color: #f08a24;
}

.area {
  height: 63px;
  line-height: 17px;
  padding-top: 7px;
  font-size: 12.8px;
}

.area .fx {
  position: absolute;
  right: 8px;
  top: 30px;
}

.resize {
  position: absolute;
  right: 1px;
  bottom: 1px;
  width: 9px;
  height: 9px;
  fill: none;
  stroke: #595959;
  stroke-width: 0.8;
}

.thumb-box {
  height: 135px;
  box-sizing: border-box;
  margin: -2px 10px 7px;
  background: #ccc;
  border: 2px solid #bbb;
  border-radius: 4px;
}

.thumb-box svg {
  display: block;
  width: 100%;
  height: 100%;
}

.mpm path {
  fill: none;
  stroke: #b9a063;
  stroke-width: 4;
}

.mpm-dot {
  fill: #b9a063;
}

.mpm-in {
  fill: #b9a063;
  stroke: #d6ceb4;
  stroke-width: 1.4;
}

.white {
  fill: #fff;
}

.shade {
  fill: #777;
  stroke: #ddd;
  stroke-width: 1;
}

.pic {
  fill: #fff;
  stroke: #fff;
}

.pic-in {
  fill: #777;
}

.close {
  stroke: #fff;
  stroke-width: 2;
}

.sep {
  border-top: 1px solid #e6e6e6;
}

.select {
  display: flex;
  align-items: center;
  justify-content: space-between;
  padding: 0 10px 0 10px;
  font-weight: 700;
  font-size: 12.8px;
  color: #595959;
}

.select.last {
  margin-bottom: 8px;
}

.caret {
  border-left: 4.5px solid transparent;
  border-right: 4.5px solid transparent;
  border-top: 6px solid #595959;
}

.props-row {
  height: 38px;
  line-height: 37px;
  box-sizing: border-box;
  padding-left: 10px;
  background: #fafafa;
  border-bottom: 1px solid #e6e6e6;
  font-size: 13.6px;
}
</style>
